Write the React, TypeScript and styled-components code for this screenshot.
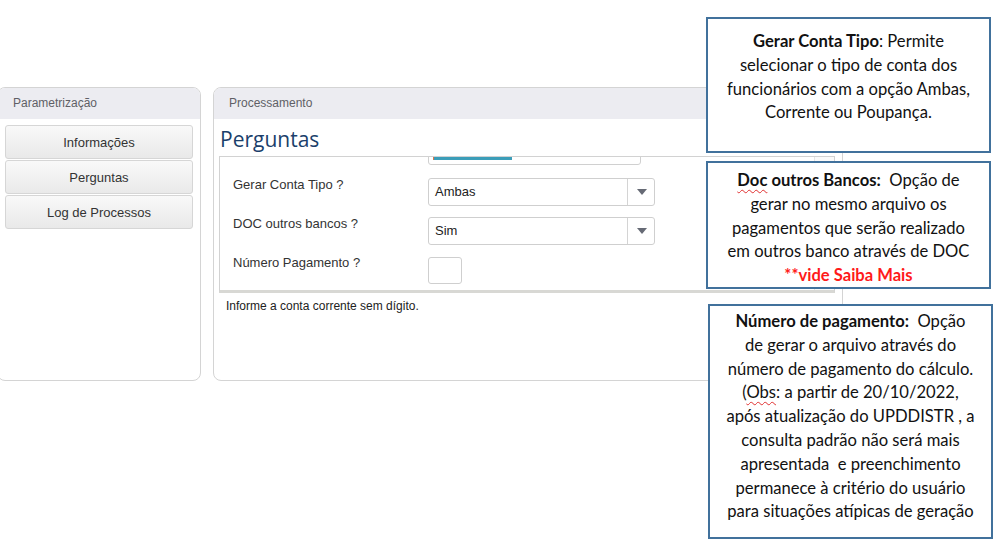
import React from 'react';
import styled, { createGlobalStyle } from 'styled-components';

const GlobalStyle = createGlobalStyle`
  body {
    margin: 0;
    background: #ffffff;
    font-family: 'Liberation Sans', Arial, sans-serif;
  }
`;

const MENU = ['Informações', 'Perguntas', 'Log de Processos'];

const App = () => {
  return (
    <Page>
      <GlobalStyle />
      <Panels>
        <SidePanel>
          <PanelHeader>Parametrização</PanelHeader>
          <MenuList>
            {MENU.map((item) => (
              <MenuButton key={item}>{item}</MenuButton>
            ))}
          </MenuList>
        </SidePanel>

        <MainPanel>
          <PanelHeader>Processamento</PanelHeader>
          <Title>Perguntas</Title>
          <QuestionBox>
            <Questions>
              <CutInput>
                <Progress />
              </CutInput>
              <Row>
                <Label>Gerar Conta Tipo ?</Label>
                <Select>
                  <SelectValue>Ambas</SelectValue>
                  <Arrow />
                </Select>
              </Row>
              <Row>
                <Label>DOC outros bancos ?</Label>
                <Select>
                  <SelectValue>Sim</SelectValue>
                  <Arrow />
                </Select>
              </Row>
              <Row>
                <Label>Número Pagamento ?</Label>
                <SmallInput />
              </Row>
            </Questions>
            <ScrollTrack />
          </QuestionBox>
          <Hint>Informe a conta corrente sem dígito.</Hint>
        </MainPanel>
      </Panels>

      <Callout $top={17} $left={706} $height={136} $pad={11}>
        <b>Gerar Conta Tipo</b>: Permite
        <br />
        selecionar o tipo de conta dos
        <br />
        funcionários com a opção Ambas,
        <br />
        Corrente ou Poupança.
      </Callout>
      <Callout $top={161} $left={706} $height={128} $pad={6}>
        <b>
          <Spell>Doc</Spell> outros Bancos:
        </b>
        &nbsp; Opção de
        <br />
        gerar no mesmo arquivo os
        <br />
        pagamentos que serão realizado
        <br />
        em outros banco através de DOC
        <br />
        <Red>**vide Saiba Mais</Red>
      </Callout>
      <Callout $top={304} $left={708} $height={235} $pad={4}>
        <b>Número de pagamento:</b>&nbsp; Opção
        <br />
        de gerar o arquivo através do
        <br />
        número de pagamento do cálculo.
        <br />
        (<Spell>Obs</Spell>: a partir de 20/10/2022,
        <br />
        após atualização do UPDDISTR , a
        <br />
        consulta padrão não será mais
        <br />
        apresentada&nbsp; e preenchimento
        <br />
        permanece à critério do usuário
        <br />
        para situações atípicas de geração
      </Callout>
    </Page>
  );
};

export default App;

const Page = styled.div`
  position: relative;
  width: 997px;
  height: 550px;
  overflow: hidden;
`;

const Panels = styled.div`
  display: flex;
  gap: 12px;
  padding-top: 87px;
  margin-left: -3px;
`;

const SidePanel = styled.section`
  width: 204px;
  height: 294px;
  border: 1px solid #d4d4d4;
  border-radius: 8px;
  overflow: hidden;
  background: #fff;
  box-sizing: border-box;
`;

const MainPanel = styled(SidePanel)`
  width: 630px;
  padding: 0 7px 0 5px;
  & > header {
    margin: 0 -7px 0 -5px;
  }
`;

const PanelHeader = styled.header`
  height: 31px;
  line-height: 31px;
  background: #ececf1;
  padding-left: 15px;
  font-size: 12px;
  color: #5f5f66;
`;

const MenuList = styled.div`
  display: flex;
  flex-direction: column;
  gap: 1px;
  padding: 6px 7px 0 7px;
`;

const MenuButton = styled.div`
  height: 34px;
  line-height: 34px;
  box-sizing: border-box;
  text-align: center;
  font-size: 13px;
  color: #333;
  border: 1px solid #d6d6d6;
  border-radius: 3px;
  background: linear-gradient(#f9f9f9, #e9e9e9);
`;

const Title = styled.h1`
  margin: 0;
  padding: 7px 0 0 1px;
  height: 37px;
  box-sizing: border-box;
  font-family: 'Open Sans', sans-serif;
  font-weight: 400;
  font-size: 21px;
  line-height: 26px;
  color: #1b3f6b;
`;

const QuestionBox = styled.div`
  display: flex;
  height: 137px;
  border: 1px solid #d2d2d2;
  border-bottom: 3px solid #d8d8d4;
  box-sizing: border-box;
  overflow: hidden;
`;

const Questions = styled.div`
  flex: 1;
  padding-left: 13px;
`;

const ScrollTrack = styled.div`
  width: 19px;
  border-left: 1px solid #e6e6e6;
  background: #fafafa;
`;

const CutInput = styled.div`
  margin: -6px 0 12px 195px;
  width: 213px;
  height: 14px;
  border: 1px solid #d0d0d0;
  border-radius: 3px;
  position: relative;
  box-sizing: border-box;
`;

const Progress = styled.div`
  position: absolute;
  left: 4px;
  bottom: 4px;
  width: 78px;
  height: 3px;
  background: #3b9db8;
  border-left: 1px solid #d9744a;
`;

const Row = styled.div`
  display: flex;
  align-items: flex-start;
  height: 39px;
`;

const Label = styled.div`
  width: 195px;
  font-size: 13px;
  color: #333;
`;

const Select = styled.div`
  display: flex;
  width: 227px;
  height: 28px;
  margin-top: 1px;
  border: 1px solid #cfcfcf;
  border-radius: 3px;
  box-sizing: border-box;
`;

const SelectValue = styled.div`
  flex: 1;
  padding-left: 6px;
  line-height: 26px;
  font-size: 13px;
  color: #222;
  border-right: 1px solid #d4d4d4;
`;

const Arrow = styled.div`
  width: 26px;
  position: relative;
  &::after {
    content: '';
    position: absolute;
    left: 9px;
    top: 10px;
    border-left: 5px solid transparent;
    border-right: 5px solid transparent;
    border-top: 6px solid #666a75;
  }
`;

const SmallInput = styled.div`
  width: 34px;
  height: 27px;
  margin-top: 2px;
  border: 1px solid #cfcfcf;
  border-radius: 3px;
  box-sizing: border-box;
`;

const Hint = styled.div`
  padding: 6px 0 0 7px;
  font-size: 12px;
  color: #222;
`;

const Callout = styled.div<{ $top: number; $left: number; $height: number; $pad?: number }>`
  position: absolute;
  top: ${(p) => p.$top}px;
  left: ${(p) => p.$left}px;
  width: 285px;
  height: ${(p) => p.$height}px;
  box-sizing: border-box;
  padding: ${(p) => p.$pad ?? 13}px 0 0;
  border: 2px solid #41719c;
  background: #fff;
  text-align: center;
  white-space: nowrap;
  font-family: 'Lato', 'Open Sans', sans-serif;
  font-size: 16.6px;
  line-height: 23.8px;
  color: #111;
  b {
    font-weight: 700;
  }
`;

const Spell = styled.span`
  text-decoration: underline wavy #e03030;
  text-decoration-thickness: 1px;
  text-underline-offset: 3px;
`;

const Red = styled.b`
  color: #ff1a1a;
`;
